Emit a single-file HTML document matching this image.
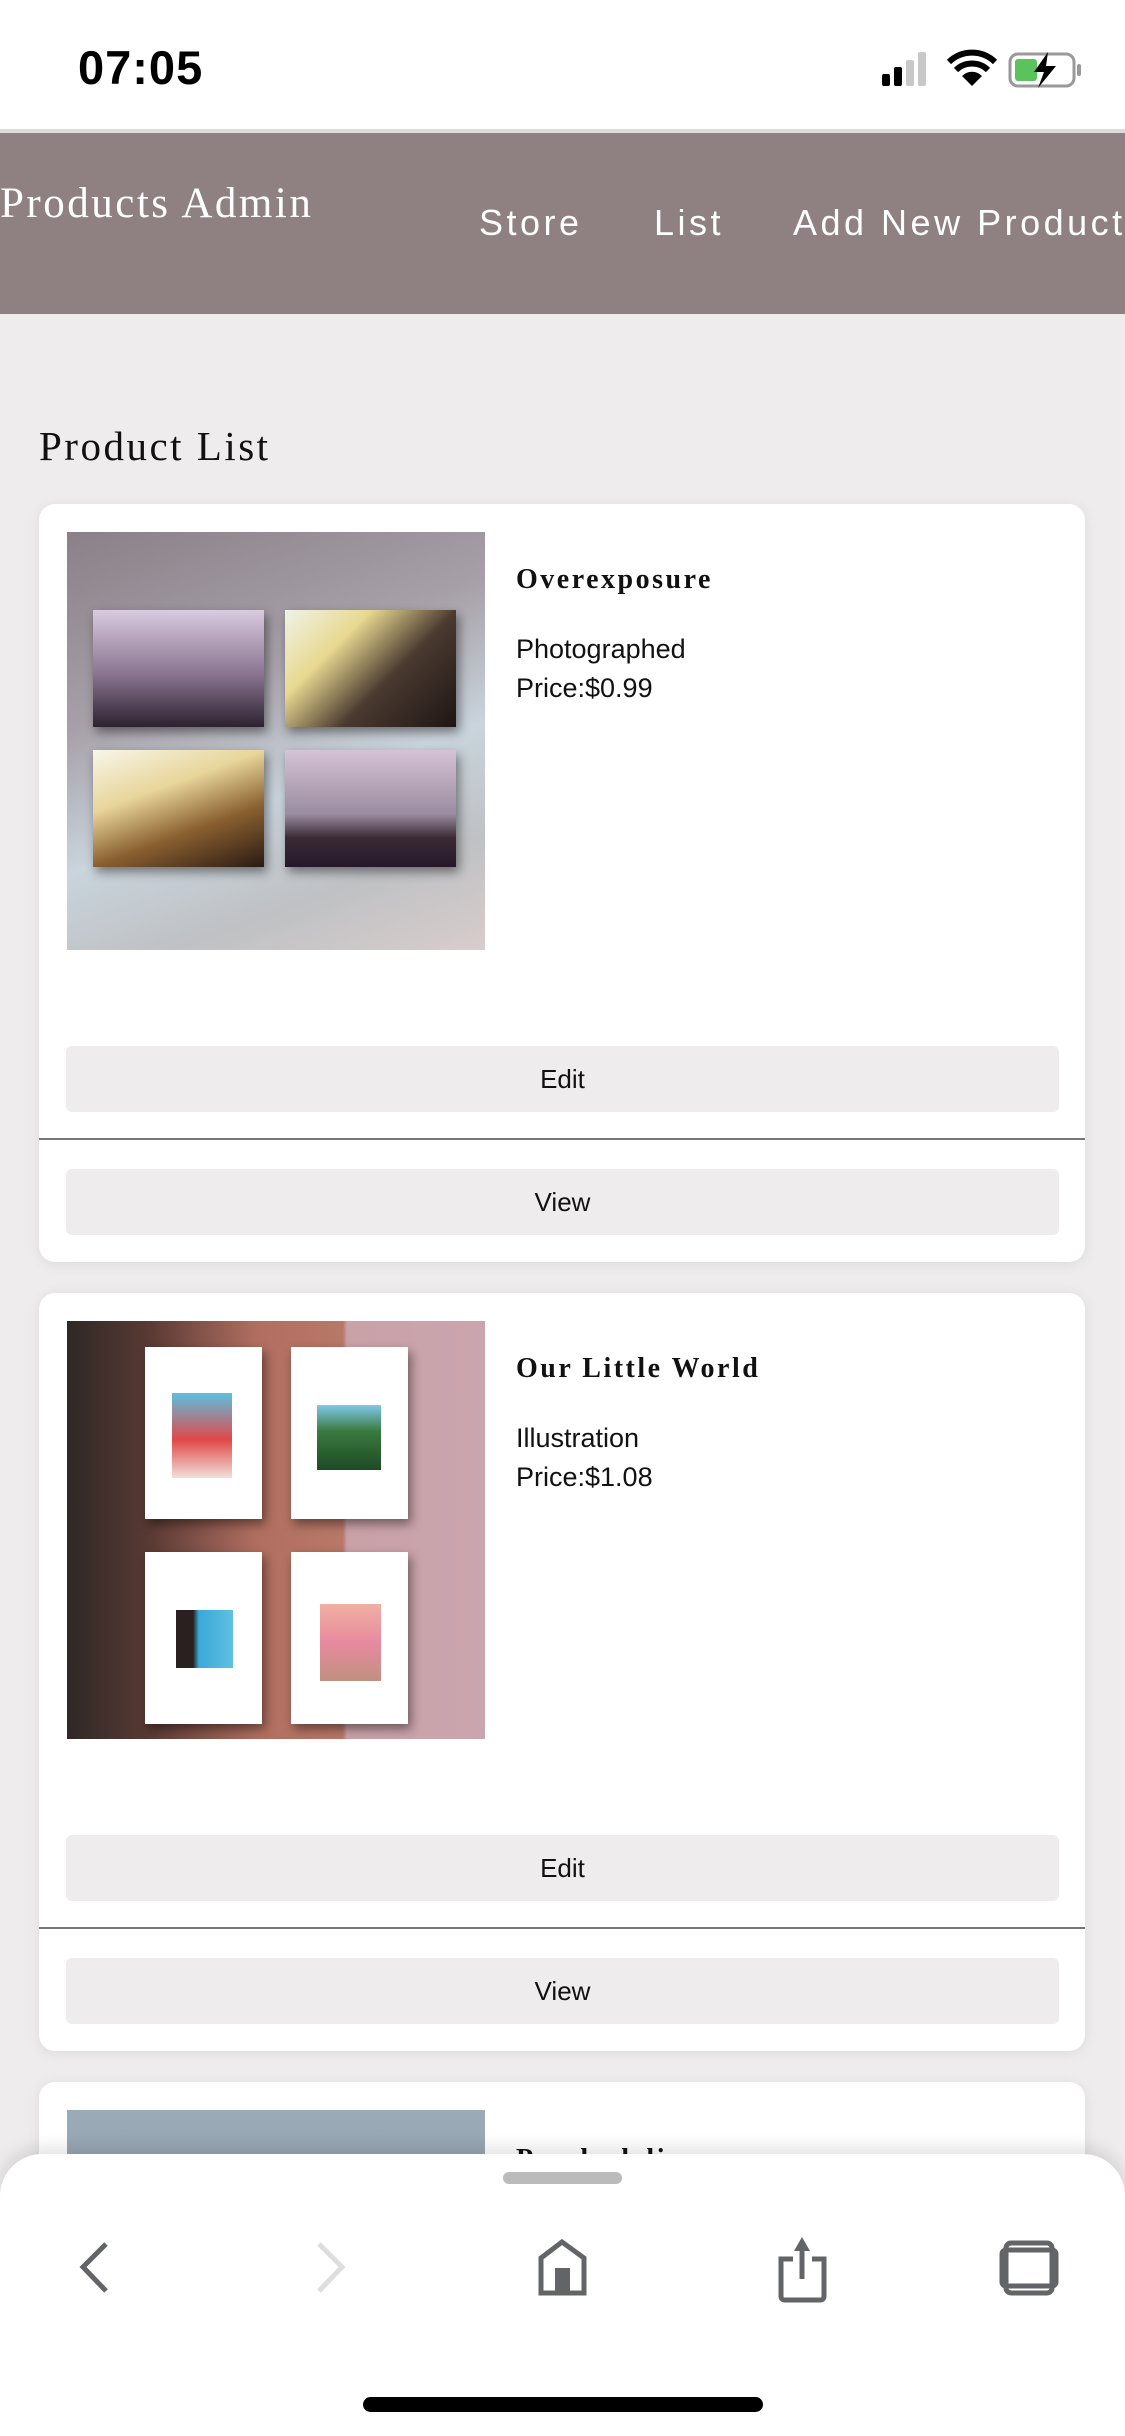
<!DOCTYPE html>
<html style="width:1125px;height:2436px;overflow:hidden"><head><meta charset="utf-8">
<style>
*{margin:0;padding:0;box-sizing:border-box}
body{width:1125px;height:2436px;overflow:hidden;background:#eeeced;position:relative;font-family:"Liberation Sans",sans-serif}
.status{position:absolute;left:0;top:0;width:1125px;height:130px;background:#fff}
.time{position:absolute;left:78px;top:40px;font-size:47px;font-weight:bold;color:#000;letter-spacing:1px}
.sep{position:absolute;left:0;top:129px;width:1125px;height:4px;background:#dcdcdd}
.hdr{position:absolute;left:0;top:133px;width:1125px;height:181px;background:#8f8181;color:#fff;overflow:hidden}
.brand{position:absolute;left:0;top:46px;font-family:"Liberation Serif",serif;font-size:43px;letter-spacing:2.5px;white-space:nowrap}
.nav{position:absolute;top:69px;font-size:36px;letter-spacing:3.5px;white-space:nowrap}
.h1{position:absolute;left:39px;top:422px;font-family:"Liberation Serif",serif;font-size:41px;letter-spacing:2.5px;color:#111}
.card{position:absolute;left:39px;width:1046px;height:758px;background:#fff;border-radius:16px;box-shadow:0 2px 14px rgba(0,0,0,.08);overflow:hidden}
.img{position:absolute;left:28px;top:28px;width:418px;height:418px;overflow:hidden}
.title{position:absolute;left:477px;top:60px;font-family:"Liberation Serif",serif;font-weight:bold;font-size:28px;letter-spacing:2.5px;color:#111}
.cat{position:absolute;left:477px;top:126px;font-size:27px;color:#111;line-height:39px}
.btn{position:absolute;left:27px;width:993px;height:66px;background:#eeeced;border-radius:6px;text-align:center;line-height:66px;font-size:26px;color:#111}
.line{position:absolute;left:0;top:634px;width:1046px;height:2px;background:#777}
.ph{position:absolute;box-shadow:3px 5px 10px rgba(0,0,0,.45)}
.bar{position:absolute;left:0;top:2154px;width:1125px;height:282px;background:#fff;border-radius:42px 42px 0 0;box-shadow:0 -6px 18px rgba(0,0,0,.12)}
</style></head><body>
<div class="status"><div class="time">07:05</div>
<svg style="position:absolute;left:876px;top:48px" width="210" height="42" viewBox="0 0 210 42">
<rect x="6" y="26" width="8" height="12" rx="2" fill="#000"/><rect x="18" y="19" width="8" height="19" rx="2" fill="#000"/><rect x="30" y="12" width="8" height="26" rx="2" fill="#c8c8c8"/><rect x="42" y="4" width="8" height="34" rx="2" fill="#c8c8c8"/>
<path d="M96 38 L86 28 A14 14 0 0 1 106 28 Z" fill="#000"/><path d="M80 22 A23 23 0 0 1 112 22" stroke="#000" stroke-width="6" fill="none"/><path d="M73 14 A33 33 0 0 1 119 14" stroke="#000" stroke-width="6" fill="none"/>
<rect x="134" y="6" width="64" height="32" rx="8" fill="none" stroke="#999" stroke-width="3"/><rect x="139" y="11" width="22" height="22" rx="3" fill="#5bc35b"/><rect x="201" y="16" width="4" height="12" rx="2" fill="#999"/>
<path d="M172 4 L158 24 L168 24 L162 40 L180 18 L170 18 Z" fill="#000"/>
</svg></div>
<div class="sep"></div>
<div class="hdr"><div class="brand">Products Admin</div>
<div class="nav" style="left:479px">Store</div><div class="nav" style="left:654px">List</div><div class="nav" style="left:793px">Add New Product</div></div>
<div class="h1">Product List</div>

<div class="card" style="top:504px">
<div class="img" style="background:linear-gradient(160deg,#8a8088 0%,#a7a0a8 35%,#c9d4dc 60%,#bfc1c4 80%,#d8cdcc 100%)">
<div class="ph" style="left:26px;top:78px;width:171px;height:117px;background:linear-gradient(180deg,#d9cbe0,#8a7490 55%,#2c2230)"></div>
<div class="ph" style="left:218px;top:78px;width:171px;height:117px;background:linear-gradient(135deg,#eef3e8 0%,#e8d890 30%,#4a3a30 60%,#1e1614)"></div>
<div class="ph" style="left:26px;top:218px;width:171px;height:117px;background:linear-gradient(160deg,#f8f6ea 0%,#e8d59a 35%,#8a6030 65%,#2a1a14)"></div>
<div class="ph" style="left:218px;top:218px;width:171px;height:117px;background:linear-gradient(180deg,#d6c2d6,#9a8ca0 55%,#3a2a34 75%,#24182a)"></div>
</div>
<div class="title">Overexposure</div>
<div class="cat">Photographed<br>Price:$0.99</div>
<div class="btn" style="top:542px">Edit</div>
<div class="line"></div>
<div class="btn" style="top:665px">View</div>
</div>

<div class="card" style="top:1293px">
<div class="img" style="background:linear-gradient(90deg,#2e2826 0%,#5a3a34 20%,#b06e60 45%,#b87868 66%,#c9a2a8 67%,#cba5ad 100%)">
<div class="ph" style="left:78px;top:26px;width:117px;height:172px;background:#fff"><div style="position:absolute;left:27px;top:46px;width:60px;height:85px;background:linear-gradient(180deg,#5cc0e0,#e04848 55%,#f0e0d8)"></div></div>
<div class="ph" style="left:224px;top:26px;width:117px;height:172px;background:#fff"><div style="position:absolute;left:26px;top:58px;width:64px;height:65px;background:linear-gradient(180deg,#80c8e8,#3a7a40 40%,#1e4a24)"></div></div>
<div class="ph" style="left:78px;top:231px;width:117px;height:172px;background:#fff"><div style="position:absolute;left:31px;top:58px;width:57px;height:58px;background:linear-gradient(90deg,#2a2020 30%,#3aa8d8 40%,#60c0e0)"></div></div>
<div class="ph" style="left:224px;top:231px;width:117px;height:172px;background:#fff"><div style="position:absolute;left:29px;top:52px;width:61px;height:77px;background:linear-gradient(180deg,#f0b0a0,#e88aa0 50%,#c09080)"></div></div>
</div>
<div class="title">Our Little World</div>
<div class="cat">Illustration<br>Price:$1.08</div>
<div class="btn" style="top:542px">Edit</div>
<div class="line"></div>
<div class="btn" style="top:665px">View</div>
</div>

<div class="card" style="top:2082px;height:354px">
<div class="img" style="background:linear-gradient(180deg,#9aaab6,#7e909e)"></div>
<div class="title" style="top:62px">Psychedelic</div>
</div>

<div class="bar">
<div style="position:absolute;left:503px;top:18px;width:119px;height:12px;border-radius:6px;background:#bbb"></div>
<svg style="position:absolute;left:0;top:0" width="1125" height="282" viewBox="0 0 1125 282">
<path d="M106 90 L83 113 L106 137" stroke="#636468" stroke-width="5" fill="none"/>
<path d="M319 90 L342 113 L319 137" stroke="#dedede" stroke-width="5" fill="none"/>
<path d="M541 139 L541 104 L562 88 L584 104 L584 139 Z" stroke="#636468" stroke-width="5" fill="none"/>
<rect x="555" y="114" width="15" height="25" fill="#636468"/>
<path d="M793 105 L781 105 L781 142 Q781 146 785 146 L820 146 Q824 146 824 142 L824 105 L812 105" stroke="#636468" stroke-width="5" fill="none"/>
<path d="M802 125 L802 88" stroke="#636468" stroke-width="5"/><path d="M794 97 L802 83 L810 97 Z" fill="#636468"/>
<rect x="1006" y="89" width="46" height="50" rx="5" stroke="#636468" stroke-width="5" fill="none"/>
<rect x="1002" y="96" width="54" height="36" rx="4" stroke="#636468" stroke-width="5" fill="none"/>
</svg>
<div style="position:absolute;left:363px;top:243px;width:400px;height:15px;border-radius:8px;background:#000"></div>
</div>
</body></html>
